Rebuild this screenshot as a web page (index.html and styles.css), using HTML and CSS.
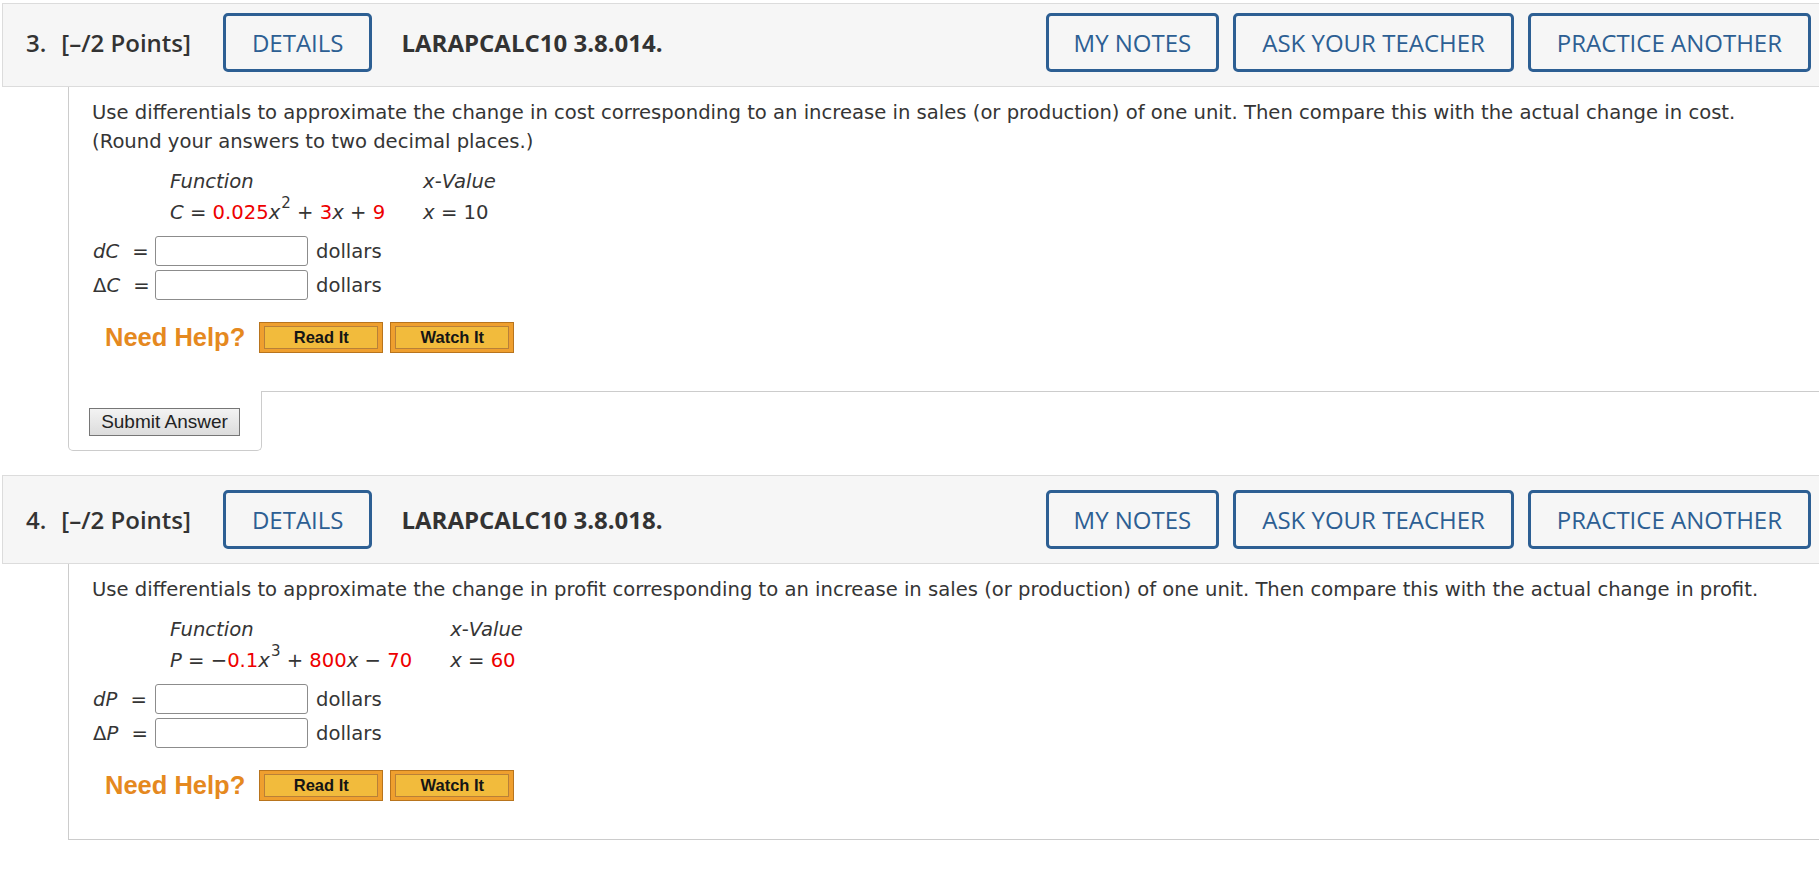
FILE: index.html
```html
<!DOCTYPE html>
<html>
<head>
<meta charset="utf-8">
<link rel="stylesheet" href="styles.css">
</head>
<body>
<div class="page">
  <section class="question first">
    <div class="qhead">
      <span class="qnum">3.</span>
      <span class="qpts">[–/2 Points]</span>
      <span class="qbtn details">DETAILS</span>
      <span class="qtitle">LARAPCALC10 3.8.014.</span>
      <span class="qbtn notes">MY NOTES</span>
      <span class="qbtn">ASK YOUR TEACHER</span>
      <span class="qbtn">PRACTICE ANOTHER</span>
    </div>
    <div class="qbody">
      <p class="prompt">Use differentials to approximate the change in cost corresponding to an increase in sales (or production) of one unit. Then compare this with the actual change in cost.<br>(Round your answers to two decimal places.)</p>
      <table class="ftable">
        <tr><td><i>Function</i></td><td><i>x</i>-<i>Value</i></td></tr>
        <tr>
          <td><i>C</i> = <span class="red">0.025</span><i>x</i><sup>2</sup> + <span class="red">3</span><i>x</i> + <span class="red">9</span></td>
          <td><i>x</i> = 10</td>
        </tr>
      </table>
      <div class="answers">
        <div class="arow"><span class="alabel"><i>dC</i> =</span><span class="abox"></span><span class="unit">dollars</span></div>
        <div class="arow"><span class="alabel">Δ<i>C</i> =</span><span class="abox"></span><span class="unit">dollars</span></div>
      </div>
      <div class="help">
        <span class="helptext">Need Help?</span>
        <span class="hbtn"><span>Read It</span></span>
        <span class="hbtn"><span>Watch It</span></span>
      </div>
    </div>
    <div class="submitbox"><span class="submit">Submit Answer</span></div>
  </section>

  <section class="question">
    <div class="qhead">
      <span class="qnum">4.</span>
      <span class="qpts">[–/2 Points]</span>
      <span class="qbtn details">DETAILS</span>
      <span class="qtitle">LARAPCALC10 3.8.018.</span>
      <span class="qbtn notes">MY NOTES</span>
      <span class="qbtn">ASK YOUR TEACHER</span>
      <span class="qbtn">PRACTICE ANOTHER</span>
    </div>
    <div class="qbody">
      <p class="prompt">Use differentials to approximate the change in profit corresponding to an increase in sales (or production) of one unit. Then compare this with the actual change in profit.</p>
      <table class="ftable">
        <tr><td><i>Function</i></td><td><i>x</i>-<i>Value</i></td></tr>
        <tr>
          <td><i>P</i> = −<span class="red">0.1</span><i>x</i><sup>3</sup> + <span class="red">800</span><i>x</i> − <span class="red">70</span></td>
          <td><i>x</i> = <span class="red">60</span></td>
        </tr>
      </table>
      <div class="answers">
        <div class="arow"><span class="alabel"><i>dP</i> =</span><span class="abox"></span><span class="unit">dollars</span></div>
        <div class="arow"><span class="alabel">Δ<i>P</i> =</span><span class="abox"></span><span class="unit">dollars</span></div>
      </div>
      <div class="help">
        <span class="helptext">Need Help?</span>
        <span class="hbtn"><span>Read It</span></span>
        <span class="hbtn"><span>Watch It</span></span>
      </div>
    </div>
  </section>
</div>
</body>
</html>
```

FILE: styles.css
```css
html, body {
  margin: 0;
  padding: 0;
  background: #ffffff;
}
body {
  font-family: "DejaVu Sans", Verdana, sans-serif;
  color: #353535;
  overflow: hidden;
}
.page {
  padding: 3px 0 0 2px;
}
.question {
  margin-bottom: 24px;
}
.qhead {
  display: flex;
  align-items: center;
  background: #f6f6f6;
  border: 1px solid #dcdcdc;
  border-right: none;
  padding: 14px 8px 14px 23px;
  font-family: "Open Sans", sans-serif;
  font-size: 24px;
  color: #333333;
}
.first .qhead {
  padding-top: 9px;
}
.qnum {
  font-weight: 600;
  margin-right: 15px;
}
.qpts {
  font-weight: 600;
  margin-right: 32px;
}
.qbtn {
  display: flex;
  align-items: center;
  box-sizing: border-box;
  height: 59px;
  padding: 0 26px;
  border: 3px solid #2d5f93;
  border-radius: 5px;
  color: #2d5f93;
  margin-left: 14px;
}
.qbtn.details {
  margin-left: 0;
}
.qtitle {
  font-weight: 700;
  margin-left: 29px;
}
.qbtn.notes {
  margin-left: auto;
  padding: 0 25px;
}
.qbody {
  margin-left: 66px;
  border-left: 1px solid #cccccc;
  border-bottom: 1px solid #cccccc;
  padding: 11px 0 38px 23px;
  font-size: 19.6px;
}
.prompt {
  margin: 0 0 10px 0;
  line-height: 29px;
}
.ftable {
  border-collapse: collapse;
  margin-left: 78px;
}
.ftable td {
  padding: 0 38px 0 0;
  height: 31px;
  line-height: 31px;
  vertical-align: middle;
}
.ftable sup {
  font-size: 15px;
  line-height: 0;
  position: relative;
  top: -3px;
  padding-left: 1px;
}
.red {
  color: #ee0000;
}
.answers {
  margin-top: 8px;
  display: flex;
  flex-direction: column;
  gap: 4px;
}
.arow {
  display: flex;
  align-items: center;
  height: 30px;
}
.alabel {
  width: 53px;
  margin-left: 1px;
  margin-right: 9px;
  white-space: pre;
  word-spacing: 7px;
}
.abox {
  box-sizing: border-box;
  width: 153px;
  height: 30px;
  border: 1px solid #8c8c8c;
  border-radius: 3px;
  background: #ffffff;
}
.unit {
  margin-left: 8px;
}
.help {
  display: flex;
  align-items: center;
  margin-top: 22px;
  padding-left: 13px;
}
.helptext {
  font-family: "Liberation Sans", Arial, sans-serif;
  font-weight: 700;
  font-size: 25.5px;
  color: #e5891f;
  margin-right: 14px;
}
.hbtn {
  box-sizing: border-box;
  width: 124px;
  height: 31px;
  border: 1px solid #b8741d;
  background: #ef9f2e;
  padding: 3px 4px;
  margin-right: 7px;
}
.hbtn span {
  display: flex;
  align-items: center;
  justify-content: center;
  box-sizing: border-box;
  height: 100%;
  border: 1px solid #b98038;
  background: #f2bb3c;
  font-family: "Liberation Sans", Arial, sans-serif;
  font-weight: 700;
  font-size: 16.5px;
  color: #151515;
}
.submitbox {
  box-sizing: border-box;
  width: 194px;
  margin-left: 66px;
  margin-top: -1px;
  background: #ffffff;
  border: 1px solid #cccccc;
  border-top: none;
  border-radius: 0 0 5px 5px;
  padding: 17px 0 14px 20px;
  position: relative;
}
.submit {
  display: inline-flex;
  align-items: center;
  justify-content: center;
  box-sizing: border-box;
  width: 151px;
  height: 28px;
  border: 1px solid #767676;
  background: linear-gradient(#f3f3f3, #dcdcdc);
  font-family: "Liberation Sans", Arial, sans-serif;
  font-size: 19px;
  color: #222222;
}
```
